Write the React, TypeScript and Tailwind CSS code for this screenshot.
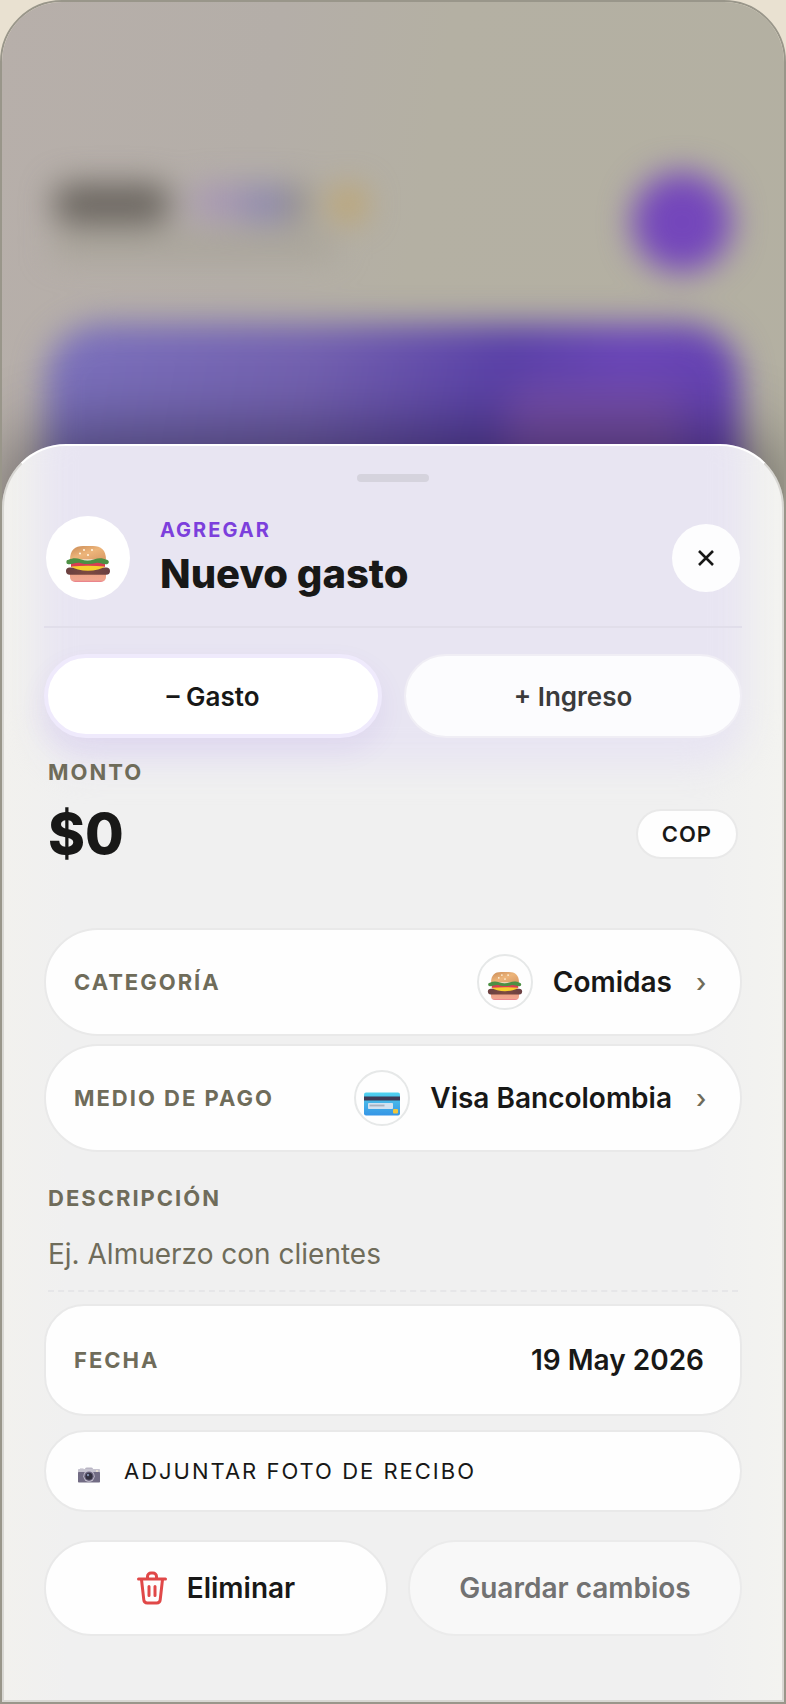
import { useId, useState } from "react";

type Kind = "gasto" | "ingreso";

const labelText = "text-[22px] leading-7 font-bold uppercase tracking-[2px] text-[#6f6c5a]";
const pill = "border-2 border-[#e9e9e9] bg-[#fefefe]";

function BurgerIcon({ className }: { className?: string }) {
  const id = useId();
  return (
    <svg aria-hidden="true" className={className} viewBox="0 0 44 36">
      <defs>
        <linearGradient id={`${id}top`} x1="0" x2="1" y1="0" y2="1">
          <stop offset="0" stopColor="#c98a56" />
          <stop offset="0.5" stopColor="#edb57a" />
          <stop offset="1" stopColor="#d99a66" />
        </linearGradient>
        <linearGradient id={`${id}bottom`} x1="0" x2="0" y1="0" y2="1">
          <stop offset="0" stopColor="#eda283" />
          <stop offset="0.8" stopColor="#f0a590" />
          <stop offset="1" stopColor="#e8788a" />
        </linearGradient>
        <linearGradient id={`${id}meat`} x1="0" x2="1">
          <stop offset="0" stopColor="#6b4040" />
          <stop offset="0.5" stopColor="#7d4a40" />
          <stop offset="1" stopColor="#6b3f42" />
        </linearGradient>
      </defs>
      <path d="M4 27h36v4a5 5 0 0 1-5 5H9a5 5 0 0 1-5-5z" fill={`url(#${id}bottom)`} />
      <rect fill={`url(#${id}meat)`} height="7.4" rx="3.7" width="44" x="0" y="21.4" />
      <path d="M5 16h34v5L22 22 5 21z" fill="#d93d52" />
      <path d="M5 20.400q17-1.500 34 0-3 2.200-7 3-10 2.600-20 0-4-.8-7-3z" fill="#f7cf2e" />
      <path d="M4 13.500C4 4 9 0 17 0h10c8 0 13 4 13 13.500z" fill={`url(#${id}top)`} />
      <path
        d="M2.500 13.800c4-2 8-2 12-.5 5 1.700 9 1.700 14 0 4-1.700 8-1.500 13 .7a2.200 2.200 0 0 1-.5 4.200c-5 .3-7-2-11-1.200-5 1.400-10 1.400-15 .2-5-1.200-8 1.300-12.500 1A2.200 2.200 0 0 1 2.500 13.800z"
        fill="#4d9044"
      />
      <g fill="#fff3dd">
        <circle cx="18" cy="4" r="1.100" />
        <circle cx="26" cy="4" r="1.100" />
        <circle cx="14" cy="7.500" r="1.100" />
        <circle cx="22" cy="9" r="1.100" />
      </g>
    </svg>
  );
}

function CardIcon({ className }: { className?: string }) {
  const id = useId();
  return (
    <svg aria-hidden="true" className={className} viewBox="0 0 36 24">
      <defs>
        <linearGradient id={`${id}card`} x1="0" x2="0" y1="0" y2="1">
          <stop offset="0" stopColor="#4fd3f0" />
          <stop offset="0.4" stopColor="#48b6e8" />
          <stop offset="1" stopColor="#3595e6" />
        </linearGradient>
      </defs>
      <rect fill={`url(#${id}card)`} height="23" rx="2" width="36" x="0" y="0.500" />
      <rect fill="#3f3a55" height="4" width="36" x="0" y="4.500" />
      <rect fill="#d3e2f0" height="6" rx="0.800" width="25" x="4" y="11" />
      <rect fill="#a9b0bd" height="1.800" width="15" x="5.500" y="12.600" />
      <rect fill="#f0c63c" height="4.600" rx="1" width="5" x="29" y="17" />
    </svg>
  );
}

function CameraIcon({ className }: { className?: string }) {
  return (
    <svg aria-hidden="true" className={className} viewBox="0 0 22 16">
      <path d="M2 1.500h3.500V3H2zM7 1.800Q7.500.5 9 .5h4q1.500 0 2 1.300L16 3H6z" fill="#b9b5c4" />
      <rect fill="#c6c3cf" height="6" rx="0.800" width="22" x="0" y="2" />
      <rect fill="#726c84" height="10.500" rx="0.800" width="22" x="0" y="5" />
      <circle cx="11" cy="9.200" fill="#c9c5d2" r="5.600" />
      <circle cx="11" cy="9.200" fill="#6b647f" r="4.800" />
      <circle cx="11" cy="9.200" fill="#33303f" r="3.500" />
      <circle cx="10" cy="8" fill="#7f8bab" r="1.200" />
      <circle cx="19" cy="4" fill="#f3ead5" r="0.900" />
    </svg>
  );
}

function TrashIcon({ className }: { className?: string }) {
  return (
    <svg
      aria-hidden="true"
      className={className}
      fill="none"
      stroke="#e04848"
      strokeLinecap="round"
      strokeLinejoin="round"
      strokeWidth="3"
      viewBox="0 0 30 34"
    >
      <path d="M1.500 8h27M10.500 7.500V5.500a3.500 3.500 0 0 1 3.500-3.500h2a3.500 3.500 0 0 1 3.500 3.500v2" />
      <path d="M4.500 8.500l2.300 20.400a3.500 3.500 0 0 0 3.500 3.100h9.400a3.500 3.500 0 0 0 3.500-3.100L25.500 8.500" />
      <path d="M12 15.500v9M18 15.500v9" />
    </svg>
  );
}

/* Dashboard behind the sheet, out of focus */
function Backdrop() {
  return (
    <div aria-hidden="true" className="absolute inset-0 overflow-hidden">
      <div className="absolute inset-0 bg-[linear-gradient(100deg,#b7afaa_0%,#b4aea8_26%,#b4b0a3_42%,#b3b0a1_100%)]" />
      <div className="flex h-full flex-col px-11 pt-[170px] blur-[16px]">
        <div className="flex items-start justify-between px-2">
          <div className="pt-3">
            <div className="flex items-center gap-6">
              <div className="h-10 w-29 rounded-2xl bg-[#68635d]" />
              <div className="flex">
                <div className="h-8 w-12 bg-[#a695b4]" />
                <div className="h-9 w-12 bg-[#8f8aae]" />
                <div className="h-9 w-4 bg-[#8c887a]" />
              </div>
              <div className="size-9 rounded-full bg-[#bfa46a]" />
            </div>
            <div className="mt-3 h-5 w-70 bg-[#a5a195]" />
          </div>
          <div className="size-25 rounded-full bg-[#7446bb]" />
        </div>
        <div className="mt-[52px] h-[480px] overflow-hidden rounded-[56px] bg-[linear-gradient(100deg,#7c72bd_0%,#7361b0_35%,#5a41a8_60%,#6a46b8_75%,#6240ae_100%)]">
          <div className="ml-[66%] mt-16 h-30 w-[26%] rounded-3xl bg-[#7850ac] blur-[12px]" />
        </div>
      </div>
    </div>
  );
}

function PickerRow({ label, value, icon }: { label: string; value: string; icon: React.ReactNode }) {
  return (
    <button className={`flex h-27 w-full items-center justify-between rounded-full pl-7 pr-8 ${pill}`} type="button">
      <span className={labelText}>{label}</span>
      <span className="flex items-center">
        <span className="flex size-14 items-center justify-center rounded-full border-2 border-[#e6e8e8] pt-2">
          {icon}
        </span>
        <span className="ml-5 text-[28px] font-semibold">{value}</span>
        <span className="ml-6 w-3 text-left text-[26px] font-medium text-[#6f6c5a]">›</span>
      </span>
    </button>
  );
}

export default function App() {
  const [kind, setKind] = useState<Kind>("gasto");
  const [amount, setAmount] = useState("$0");
  const [description, setDescription] = useState("");

  function tabClass(value: Kind) {
    return kind === value
      ? "h-21 rounded-full border-4 border-[#efeafc] bg-white text-[26px] font-semibold text-[#181817] shadow-[0_12px_28px_rgba(110,70,200,0.08)]"
      : "h-21 rounded-full border-2 border-[#f0eef5] bg-[#fcfcfe] text-[26px] font-semibold text-[#3b3b3b]";
  }

  return (
    <div className="min-h-screen bg-[#e9e1d1] font-[Inter,'Liberation_Sans',sans-serif] text-[#181817]">
      <main className="relative flex min-h-screen flex-col justify-end overflow-hidden rounded-t-[62px] border-2 border-[#99968a]">
        <Backdrop />
        <section
          aria-labelledby="sheet-title"
          className="relative overflow-hidden rounded-t-[64px] border-2 border-[#d8d7d3] border-t-white bg-[linear-gradient(90deg,#f2f1ee,#f0f0f0_8%,#f0f0f0_90%,#f3f3f0)] px-10 pb-16 pt-7 shadow-[0_-12px_72px_rgba(0,0,0,0.42)]"
        >
          <div
            aria-hidden="true"
            className="absolute inset-x-9 -top-10 h-[360px] rounded-[48px] bg-[#e8e5f2] blur-[16px]"
          />
          <div className="relative">
            <div className="mx-auto h-2 w-18 rounded-full bg-[#d5d3dd]" />

            <header className="mt-[34px] flex items-center border-b-2 border-[#e1deea] pb-[26px]">
              <div className="ml-0.5 flex size-21 items-center justify-center rounded-full bg-white pt-3">
                <BurgerIcon className="h-9 w-11" />
              </div>
              <div className="ml-7.5 flex-1">
                <p className="text-xl leading-6 font-bold tracking-[2px] text-[#7c3fdc]">AGREGAR</p>
                <h1 className="mt-2 text-[40px] leading-12 font-extrabold" id="sheet-title">
                  Nuevo gasto
                </h1>
              </div>
              <button
                aria-label="Cerrar"
                className="mr-0.5 flex size-17 items-center justify-center rounded-full bg-[#fdfdfe]"
                type="button"
              >
                <svg aria-hidden="true" className="size-4" stroke="#181817" strokeWidth="2.600" viewBox="0 0 16 16">
                  <path d="M1 1l14 14M15 1L1 15" />
                </svg>
              </button>
            </header>

            <div className="mt-[26px] grid grid-cols-2 gap-[22px]">
              <button className={tabClass("gasto")} onClick={() => setKind("gasto")} type="button">
                – Gasto
              </button>
              <button className={tabClass("ingreso")} onClick={() => setKind("ingreso")} type="button">
                + Ingreso
              </button>
            </div>

            <div className="mt-5 px-1">
              <label className={`block ${labelText}`} htmlFor="amount">
                Monto
              </label>
              <div className="mt-2 flex items-center justify-between">
                <input
                  className="h-20 w-0 min-w-0 flex-1 bg-transparent text-[56px] font-extrabold outline-none"
                  id="amount"
                  onChange={(event) => setAmount(event.target.value)}
                  value={amount}
                />
                <button
                  className={`h-12.5 rounded-full px-6 text-[22px] font-semibold tracking-[1px] ${pill}`}
                  type="button"
                >
                  COP
                </button>
              </div>
            </div>

            <div className="mt-[54px] space-y-2">
              <PickerRow icon={<BurgerIcon className="h-7 w-9" />} label="Categoría" value="Comidas" />
              <PickerRow icon={<CardIcon className="mt-1 h-6 w-9" />} label="Medio de pago" value="Visa Bancolombia" />
            </div>

            <div className="mt-8 px-1">
              <label className={`block ${labelText}`} htmlFor="description">
                Descripción
              </label>
              <input
                className="mt-3 h-[68px] w-full border-b-2 border-dashed border-[#e6e6e8] bg-transparent pb-1.5 text-[28px] outline-none placeholder:text-[#6f6c5a]"
                id="description"
                onChange={(event) => setDescription(event.target.value)}
                placeholder="Ej. Almuerzo con clientes"
                value={description}
              />
            </div>

            <button
              className={`mt-3 flex h-28 w-full items-center justify-between rounded-[40px] pl-7 pr-9 ${pill}`}
              type="button"
            >
              <span className={labelText}>Fecha</span>
              <span className="text-[28px] font-semibold">19 May 2026</span>
            </button>

            <button className={`mt-3.5 flex h-20.5 w-full items-center rounded-full px-8 ${pill}`} type="button">
              <CameraIcon className="mt-2 h-4 w-5.5" />
              <span className="ml-6 text-[22px] tracking-[2px]">ADJUNTAR FOTO DE RECIBO</span>
            </button>

            <div className="mt-7 grid grid-cols-[1.03fr_1fr] gap-5">
              <button
                className={`flex h-24 items-center justify-center gap-5 rounded-full text-[28px] font-semibold ${pill}`}
                type="button"
              >
                <TrashIcon className="h-8.5 w-7.5" />
                Eliminar
              </button>
              <button
                className="h-24 rounded-full border-2 border-[#ebebeb] bg-[#f8f8f8] text-[28px] font-semibold text-[#727272]"
                disabled
                type="button"
              >
                Guardar cambios
              </button>
            </div>
          </div>
        </section>
      </main>
    </div>
  );
}
